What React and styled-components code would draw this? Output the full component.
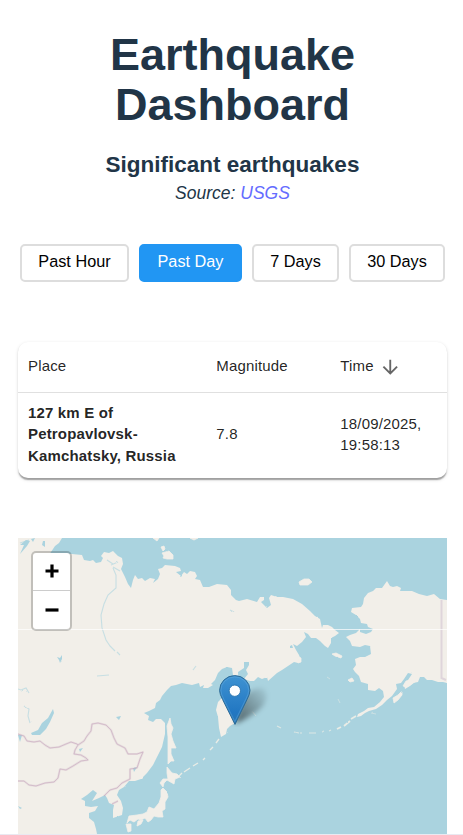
import React from "react";
import styled, { createGlobalStyle } from "styled-components";

const GlobalStyle = createGlobalStyle`
  * { box-sizing: border-box; }
  html, body { margin: 0; background: #fff; overflow: hidden; }
  body { font-family: "Liberation Sans", Arial, sans-serif; color: #213547; }
`;

const Page = styled.div`
  height: 835px;
  display: flex;
  flex-direction: column;
  overflow: hidden;
  border-bottom: 1px solid #e9e9f1;
`;

const Header = styled.header`
  padding-top: 30px;
  text-align: center;
`;

const Title = styled.h1`
  width: 300px;
  margin: 0 auto;
  padding-left: 2px;
  font-size: 45px;
  line-height: 50px;
`;

const Subtitle = styled.h2`
  margin: 21px 0 0 2px;
  font-size: 22.5px;
  line-height: 27px;
`;

const Source = styled.p`
  margin: 2px 0 0 2px;
  font-size: 17.5px;
  line-height: 26px;
  font-style: italic;
`;

const SourceLink = styled.a`
  color: #646cff;
  text-decoration: none;
`;

const Ranges = styled.nav`
  display: flex;
  gap: 10px;
  height: 38px;
  margin: 38px 0 0 20px;
`;

const RangeButton = styled.button`
  width: ${(p) => p.$width}px;
  flex: none;
  padding: 0 0 3px;
  border: 2px solid ${(p) => (p.$active ? "#2196f3" : "#ddd")};
  border-radius: 5px;
  background: ${(p) => (p.$active ? "#2196f3" : "#fff")};
  color: ${(p) => (p.$active ? "#fff" : "#000")};
  font: 16.25px "Liberation Sans", Arial, sans-serif;
`;

const TableCard = styled.section`
  width: 429px;
  height: 136px;
  margin: 60px 0 0 18px;
  flex: none;
  border-radius: 10px;
  overflow: hidden;
  background: #fff;
  color: rgba(0, 0, 0, 0.87);
  box-shadow: 0 2.5px 1.25px -1.25px rgba(0, 0, 0, 0.2), 0 1.25px 1.25px rgba(0, 0, 0, 0.14),
    0 1.25px 3.75px rgba(0, 0, 0, 0.12);
`;

const Row = styled.div`
  display: grid;
  grid-template-columns: 188.3px 124px 1fr;
  align-items: center;
  height: ${(p) => (p.$head ? 51 : 84)}px;
  padding-bottom: 2px;
  border-bottom: ${(p) => (p.$head ? "1px solid #e0e0e0" : "0")};
  font-size: 15px;
  line-height: 21.45px;
  letter-spacing: 0.16px;
`;

const Cell = styled.div`
  display: flex;
  align-items: center;
  gap: 5px;
  padding: 0 10px;
  font-weight: ${(p) => (p.$strong ? 700 : 400)};
  svg { margin-top: 2px; }
`;

const MapFrame = styled.section`
  position: relative;
  width: 429px;
  height: 296px;
  margin: 60px 0 0 18px;
  flex: none;
  overflow: hidden;
  background: #aad3df;
`;

const ZoomControl = styled.div`
  position: absolute;
  left: 13px;
  top: 13px;
  width: 41px;
  height: 80px;
  border: 2px solid rgba(0, 0, 0, 0.2);
  border-radius: 5px;
  background: #fff;
  background-clip: padding-box;
`;

const ZoomButton = styled.button`
  display: flex;
  align-items: center;
  justify-content: center;
  width: 37px;
  height: 38px;
  padding: 0 0 1px;
  border: 0;
  border-bottom: ${(p) => (p.$divided ? "1px solid #ccc" : "0")};
  background: transparent;
`;

const Pin = styled.svg`
  position: absolute;
  left: 198px;
  top: 133px;
`;

const MAINLAND = `M18 538H62L59 543 55 546 51 552 48 556 57 553 72 554 82 555 84 560 90 561 93 560 96 563 101 562
103 558 101 556 104 552 109 553 113 551 118 556 122 558 123 564 121 569 125 577 128 584 131 588 133 580 135 575 138 579
142 578 145 581 150 578 155 579 153 583 158 579 160 574 158 569 162 568 165 565 175 566 180 568 181 571 176 572 181 576
184 572 187 574 190 571 195 572 197 576 195 579 200 580 203 587 209 587 217 584 227 585 231 590 231 595 236 600 239 601
247 599 257 602 260 597 264 597 264 600 261 602 267 608 271 605 269 598 271 595 277 597 283 597 293 599 302 604 310 611
315 616 320 619 322 628 323 625 328 625 332 627 335 630 339 633 335 636 331 638 331 643 328 648 325 646 320 641 316 638
311 638 308 634 304 632 306 637 302 642 297 646 293 644 296 650 299 655 301 661 298 663 294 662 288 666 282 670 277 673
268 681 267 677 262 679 258 677 254 681 250 681 244 679 248 674 246 670 249 665 249 662 244 662 244 668 238 672 239 694
240 702 239 711 236 716 235 723 230 726 227 729 226 734 221 737 219 728 218 717 216 710 218 702 222 698 226 692 231 684
233 675 232 668 227 667 222 669 218 673 215 680 211 684 213 685 208 688 203 688 204 685 200 687 199 683 192 685 187 684
182 683 176 685 171 686 167 690 162 696 160 700 156 703 155 708 149 711 144 713 149 716 148 720 153 722 156 719 161 719
165 723 165 734 162 747 157 757 153 765 147 773 141 779 135 781 129 781 124 787 119 790 117 795 121 801 123 808 122 815
113 818 113 810 114 805 109 803 107 798 105 795 99 798 92 801 97 793 93 790 87 795 81 799 85 801 85 806 91 807 98 806 95
811 89 813 89 818 94 822 96 829 97 834H18Z`;

const ALASKA = `M387 581L390 586 393 587 397 586 401 588 400 591 406 591 412 591 419 594 427 596 434 594 440 599 447 600V683
L443 682 438 682 432 680 427 680 424 677 420 677 418 682 413 683 410 686 405 689 404 685 408 680 412 674 408 673 404 679
401 683 396 684 397 689 392 696 387 700 382 705 376 709 369 711 365 713 361 716 357 717 358 714 364 711 368 708 374 707
380 702 384 697 383 691 379 688 375 691 368 690 368 684 361 682 359 676 355 672 353 669 356 665 355 659 360 657 365 657
371 654 370 646 365 645 360 647 352 646 350 641 346 637 350 635 356 633 360 629 360 632 366 634 371 632 373 629 368 627
367 624 361 623 360 619 356 615 351 612 352 608 361 607 363 604 364 598 368 593 373 591 376 588 382 588Z`;

const ISLANDS = `M170 718L171 724 173 728 171 734 173 741 176 748 171 748 171 754 174 761 171 761 168 764 168 750 168 737 167 726Z
M167 767L172 773 177 774 180 777 175 779 174 784 167 780 164 783 163 787 160 783 163 779 168 779 167 773Z
M163 788L167 792 168 797 165 802 165 809 162 811 163 817 158 817 154 816 151 820 148 822 145 818 141 820 138 819 134 822
130 820 127 823 129 816 137 815 143 814 147 812 149 807 154 809 159 803 161 797 161 790Z
M138 821L143 820 141 824 137 826Z M126 824L131 824 131 831 128 832Z
M162 553L164 556 163 558 167 559 173 559 173 555 169 551Z M161 547L164 546 165 549 163 551Z
M153 538H159L157 541ZM190 538H198L194 540Z M299 582L304 579 309 579 312 582 308 585 300 585Z
M332 654L336 653 342 656 341 658 335 656Z M402 691L402 695 398 700 394 703 393 698 398 695Z
M403 686L406 681 411 680 417 680 412 684 406 687Z M348 680L352 678 354 681 350 682Z
M299 657L301 658 301 662 298 663Z`;

const INLAND_WATER = `M53 709L54 713 50 722 46 729 40 735 32 735 31 733 38 730 42 723 48 718Z
M20 545L26 540 30 541 27 546 20 554 24 545Z M31 539L35 538 33 542Z M43 541L45 541 45 547 42 545Z
M18 735L22 735 20 742Z M18 806L22 808 20 809Z M133 768L137 767 134 772Z M79 749L83 748 80 752Z
M116 717L121 716 119 720Z M290 646L292 645 293 648 290 648Z M57 657L60 658 62 655 62 659 60 663 59 660Z`;

const RIVERS = `M113 568L116 575 116 588 108 595 104 604 101 615 102 628 106 640 110 646M111 565L118 562M113 564L107 560
M113 567L120 571M110 646L115 651M117 652L120 655M18 689L21 690 26 688 29 693M24 706L29 709 28 716 30 723
M97 676L109 675M193 670L196 666M230 610L234 612M20 543L29 540`;

const BORDERS = `M18 734L24 736 27 741 34 742 40 741 45 745 50 748 59 747 66 744 71 742 77 744 78 745 M78 745L84 741
87 736 91 731 92 724 98 723 106 725 111 730 114 738 117 744 125 748 128 754 137 754 143 752 140 759 137 768 130 769
130 779 122 783 117 788 110 790 104 796 M78 745L75 750 74 754 81 755 86 758 88 760 81 761 73 766 66 770 60 769 58 778
54 782 45 783 36 786 29 785 24 781 18 781 M112 804L118 801`;

function WorldMap() {
  return (
    <svg width="429" height="296" viewBox="18 538 429 296" aria-label="Map">
      <defs>
        <filter id="coast" filterUnits="userSpaceOnUse" x="10" y="530" width="445" height="312">
          <feTurbulence type="fractalNoise" baseFrequency=".2" numOctaves="1" seed="4" result="n" />
          <feDisplacementMap in="SourceGraphic" in2="n" scale="2" xChannelSelector="R" yChannelSelector="G" />
          <feGaussianBlur stdDeviation=".5" />
        </filter>
      </defs>
      <g filter="url(#coast)">
        <path d="M0 520H470V850H0Z" fill="#aad3df" />
        <g fill="#f2efe9" strokeLinejoin="round">
          <path d={MAINLAND} />
          <path d="M8 528H62V538H18V834H97V844H8Z" />
          <path d={ALASKA} />
          <path d="M446 600H458V683H446Z" />
          <path d={ISLANDS} stroke="#f2efe9" strokeWidth=".8" />
        </g>
        <path d={INLAND_WATER} fill="#aad3df" />
        <path d={RIVERS} fill="none" stroke="#aad3df" strokeWidth="1.1" opacity=".6" />
        <g fill="none" stroke="#e9ece6">
          <path d="M219 739L216 743M213 747L210 750M205 758L203 760M198 763L193 766M190 768L184 772M182 773L179 776" strokeWidth="1.4" />
          <path d="M356 716L351 719M350 721L344 726M341 727L337 729" strokeWidth="1.8" />
          <path d="M331 730L329 731M324 731L321 732M316 733L309 733M302 733L300 733M299 733L294 732M281 728L277 726" strokeWidth="1.2" opacity=".8" />
          <path d="M371 713L376 714M252 711L256 716M338 699L340 703M327 677L330 679" opacity=".5" />
        </g>
      </g>
      <g fill="none" stroke="#c9abc0" strokeLinejoin="round">
        <path d={BORDERS} strokeWidth="2.2" opacity=".25" />
        <path d={BORDERS} strokeWidth="1" opacity=".65" />
      </g>
      <path d="M441.5 600V678L446 680" fill="none" stroke="#dfd5db" strokeWidth="2" />
      <path d="M18 629.5H447" stroke="#fff" opacity=".7" />
    </svg>
  );
}

function LocationPin() {
  return (
    <Pin width="72" height="56" viewBox="0 0 72 56" aria-label="Earthquake location">
      <defs>
        <linearGradient id="pin" x2="0" y2="1">
          <stop stopColor="#3f93d2" />
          <stop offset=".75" stopColor="#2277c2" />
          <stop offset="1" stopColor="#2575b5" />
        </linearGradient>
        <linearGradient id="shade" x1="0" y1="1" x2="1" y2="0">
          <stop stopColor="#000" stopOpacity=".55" />
          <stop offset=".9" stopColor="#000" stopOpacity=".08" />
        </linearGradient>
        <filter id="soft" x="-30%" y="-30%" width="160%" height="160%">
          <feGaussianBlur stdDeviation="2.8" />
        </filter>
      </defs>
      <path d="M19 53L26 28Q35 17 45 17 55 21 47 35 36 46 19 53Z" fill="url(#shade)" filter="url(#soft)" />
      <path d="M19 53.4L6.6 28.5Q3.6 23 3.6 19.3A15.2 14.7 0 0 1 34 19.3Q34 23 31 28.5Z" fill="url(#pin)" stroke="#2e6c97" />
      <path d="M18.8 50.6L7.7 28Q4.9 22.8 4.9 19.3A13.9 13.4 0 0 1 32.7 19.3Q32.7 22.8 29.9 28Z" fill="none" stroke="#6fb2e0" strokeOpacity=".4" />
      <circle cx="18.8" cy="19.7" r="5.7" fill="#fff" stroke="#2e79b3" />
    </Pin>
  );
}

const RANGES = [
  { label: "Past Hour", width: 109 },
  { label: "Past Day", width: 103, active: true },
  { label: "7 Days", width: 87 },
  { label: "30 Days", width: 96 },
];

export default function App() {
  return (
    <Page>
      <GlobalStyle />
      <Header>
        <Title>Earthquake Dashboard</Title>
        <Subtitle>Significant earthquakes</Subtitle>
        <Source>
          Source: <SourceLink>USGS</SourceLink>
        </Source>
      </Header>
      <Ranges>
        {RANGES.map((r) => (
          <RangeButton key={r.label} $width={r.width} $active={r.active}>
            {r.label}
          </RangeButton>
        ))}
      </Ranges>
      <TableCard>
        <Row $head>
          <Cell>Place</Cell>
          <Cell>Magnitude</Cell>
          <Cell>
            Time
            <svg width="22.5" height="22.5" viewBox="0 0 24 24" fill="#666">
              <path d="m20 12-1.41-1.41L13 16.17V4h-2v12.17l-5.58-5.59L4 12l8 8 8-8z" />
            </svg>
          </Cell>
        </Row>
        <Row>
          <Cell $strong>127 km E of Petropavlovsk-Kamchatsky, Russia</Cell>
          <Cell>7.8</Cell>
          <Cell>18/09/2025, 19:58:13</Cell>
        </Row>
      </TableCard>
      <MapFrame>
        <WorldMap />
        <LocationPin />
        <ZoomControl>
          <ZoomButton $divided aria-label="Zoom in">
            <svg width="14" height="14" viewBox="0 0 14 14">
              <path d="M.5 7H13.5M7 .5V13.5" stroke="#000" strokeWidth="3.2" />
            </svg>
          </ZoomButton>
          <ZoomButton aria-label="Zoom out">
            <svg width="14" height="14" viewBox="0 0 14 14">
              <path d="M.5 7H13.5" stroke="#000" strokeWidth="3.2" />
            </svg>
          </ZoomButton>
        </ZoomControl>
      </MapFrame>
    </Page>
  );
}
